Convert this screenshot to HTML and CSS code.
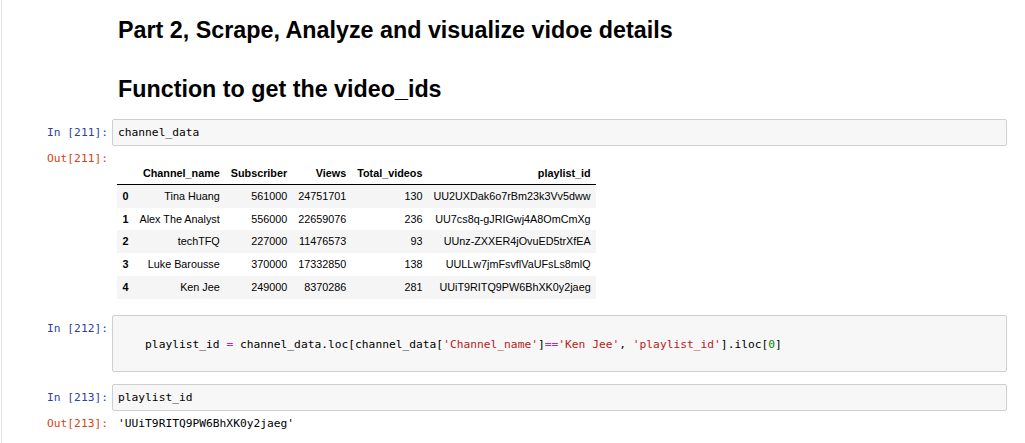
FILE: index.html
```html
<!DOCTYPE html>
<html>
<head>
<meta charset="utf-8">
<link rel="stylesheet" href="styles.css">
</head>
<body>
<div class="notebook">
  <div class="cell md-cell">
    <div class="prompt"></div>
    <div class="md">
      <h2 class="h-first">Part 2, Scrape, Analyze and visualize vidoe details</h2>
      <h2 class="h-second">Function to get the video_ids</h2>
    </div>
  </div>

  <div class="cell code-cell">
    <div class="row">
      <div class="prompt in">In&nbsp;[211]:</div>
      <pre class="input">channel_data</pre>
    </div>
    <div class="row">
      <div class="prompt out">Out[211]:</div>
      <div class="output">
        <table class="df">
          <thead>
            <tr><th></th><th>Channel_name</th><th>Subscriber</th><th>Views</th><th>Total_videos</th><th>playlist_id</th></tr>
          </thead>
          <tbody>
            <tr><th>0</th><td>Tina Huang</td><td>561000</td><td>24751701</td><td>130</td><td>UU2UXDak6o7rBm23k3Vv5dww</td></tr>
            <tr><th>1</th><td>Alex The Analyst</td><td>556000</td><td>22659076</td><td>236</td><td>UU7cs8q-gJRIGwj4A8OmCmXg</td></tr>
            <tr><th>2</th><td>techTFQ</td><td>227000</td><td>11476573</td><td>93</td><td>UUnz-ZXXER4jOvuED5trXfEA</td></tr>
            <tr><th>3</th><td>Luke Barousse</td><td>370000</td><td>17332850</td><td>138</td><td>UULLw7jmFsvflVaUFsLs8mlQ</td></tr>
            <tr><th>4</th><td>Ken Jee</td><td>249000</td><td>8370286</td><td>281</td><td>UUiT9RITQ9PW6BhXK0y2jaeg</td></tr>
          </tbody>
        </table>
      </div>
    </div>
  </div>

  <div class="cell code-cell">
    <div class="row">
      <div class="prompt in">In&nbsp;[212]:</div>
      <pre class="input multi">    playlist_id <span class="op">=</span> channel_data.loc[channel_data[<span class="str">'Channel_name'</span>]<span class="op">==</span><span class="str">'Ken Jee'</span>, <span class="str">'playlist_id'</span>].iloc[<span class="num">0</span>]</pre>
    </div>
  </div>

  <div class="cell code-cell">
    <div class="row">
      <div class="prompt in">In&nbsp;[213]:</div>
      <pre class="input">playlist_id</pre>
    </div>
    <div class="row">
      <div class="prompt out">Out[213]:</div>
      <pre class="output text-out">'UUiT9RITQ9PW6BhXK0y2jaeg'</pre>
    </div>
  </div>
</div>
</body>
</html>
```

FILE: styles.css
```css
html, body {
  margin: 0;
  padding: 0;
  background: #ffffff;
}

.notebook {
  margin-left: 1px;
  border-left: 1px solid #e0e0e0;
  min-height: 443px;
  width: 1006px;
  box-sizing: border-box;
  font-family: "Liberation Sans", Arial, sans-serif;
}

.cell {
  display: flex;
  flex-direction: column;
}

.md-cell {
  flex-direction: row;
}

.row {
  display: flex;
  align-items: flex-start;
}

.prompt {
  width: 106px;
  flex: none;
  font-family: "DejaVu Sans Mono", "Liberation Mono", monospace;
  font-size: 11.26px;
  line-height: 17px;
  text-align: right;
  padding-right: 4px;
  white-space: nowrap;
}

.prompt.in {
  color: #303f9f;
  padding-top: 5px;
}

.prompt.out {
  color: #d84315;
  padding-top: 4px;
}

.md {
  padding-left: 6px;
}

.md h2 {
  margin: 0;
  font-size: 23.3px;
  line-height: 28px;
  font-weight: bold;
  color: #000;
}

.h-first {
  padding-top: 16px;
}

.h-second {
  padding-top: 31px;
  padding-bottom: 16px;
}

.input {
  flex: 1;
  margin: 0;
  background: #f7f7f7;
  border: 1px solid #cfcfcf;
  border-radius: 2px;
  padding: 4px 5px;
  font-family: "DejaVu Sans Mono", "Liberation Mono", monospace;
  font-size: 11.26px;
  line-height: 17px;
  color: #000;
}

.input.multi {
  padding-top: 20px;
  padding-bottom: 18px;
}

.op {
  color: #aa22ff;
}

.str {
  color: #ba2121;
}

.num {
  color: #008800;
}

.output {
  flex: 1;
  padding: 16px 0 0 5px;
}

.code-cell + .code-cell {
  padding-top: 12px;
}

.code-cell:nth-child(3) {
  padding-top: 16px;
}

.text-out {
  margin: 0;
  padding: 4px 0 0 6px;
  font-family: "DejaVu Sans Mono", "Liberation Mono", monospace;
  font-size: 11.26px;
  line-height: 17px;
  color: #000;
}

.df {
  border-collapse: collapse;
  border-spacing: 0;
  font-size: 10.8px;
  color: #000;
}

.df th,
.df td {
  text-align: right;
  vertical-align: middle;
  padding: 5px 5.5px;
  line-height: 12.75px;
  white-space: nowrap;
}

.df thead th {
  font-weight: bold;
  vertical-align: bottom;
  padding: 5px 5.5px 4px;
}

.df thead {
  border-bottom: 1px solid #000;
}

.df tbody th {
  font-weight: bold;
  text-align: left;
}

.df tbody tr:nth-child(odd) {
  background: #f5f5f5;
}
```
